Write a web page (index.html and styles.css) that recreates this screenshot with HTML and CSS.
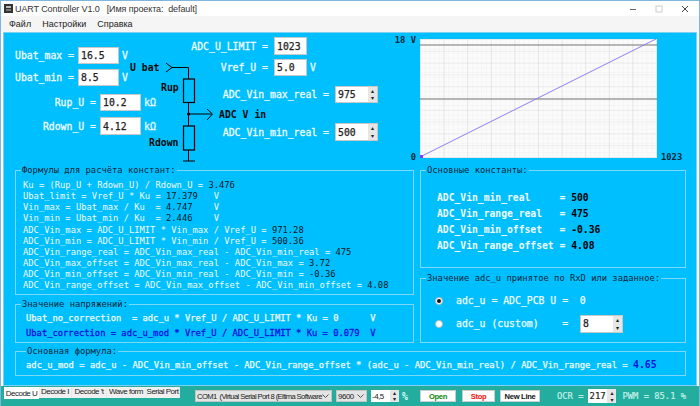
FILE: index.html
```html
<!DOCTYPE html>
<html lang="ru">
<head>
<meta charset="utf-8">
<title>UART Controller V1.0</title>
<link rel="stylesheet" href="styles.css">
</head>
<body>
<div class="window">
  <header class="titlebar">
    <svg class="appicon" width="9" height="9" viewBox="0 0 9 9"><rect width="9" height="9" fill="#333"/><rect x="2" y="2" width="5" height="2" fill="#bbb"/><rect x="2" y="5" width="5" height="2" fill="#777"/></svg>
    <span class="title">UART Controller V1.0</span>
    <span class="title project">[Имя проекта:&nbsp; default]</span>
    <div class="winctl">
      <svg width="8" height="8" viewBox="0 0 8 8"><rect x="1" y="4" width="6" height="1" fill="#666"/></svg>
      <svg width="8" height="8" viewBox="0 0 8 8"><rect x="1" y="1" width="6" height="6" fill="none" stroke="#ccc"/></svg>
      <svg width="8" height="8" viewBox="0 0 8 8"><path d="M1 1L7 7M7 1L1 7" stroke="#444"/></svg>
    </div>
  </header>
  <nav class="menubar"><span>Файл</span><span>Настройки</span><span>Справка</span></nav>

  <main class="panel">
    <section class="top">
      <div class="params">
        <div class="row r-ubat1"><span class="lbl w-ubat">Ubat_max =</span><span class="input w41">16.5</span><span class="unit">V</span></div>
        <div class="row r-ubat2"><span class="lbl w-ubat">Ubat_min =</span><span class="input w41">8.5</span><span class="unit">V</span></div>
        <div class="row r-rup"><span class="lbl w-r">Rup_U =</span><span class="input w41">10.2</span><span class="unit">kΩ</span></div>
        <div class="row r-rdown"><span class="lbl w-r">Rdown_U =</span><span class="input w41">4.12</span><span class="unit">kΩ</span></div>
      </div>
      <div class="adc">
        <div class="row a-limit"><span class="lbl w-adc">ADC_U_LIMIT =</span><span class="input w33">1023</span></div>
        <div class="row a-vref"><span class="lbl w-adc">Vref_U =</span><span class="input w33">5.0</span><span class="unit">V</span></div>
        <div class="row a-max"><span class="lbl w-real">ADC_Vin_max_real =</span><span class="input spin w43">975<i class="spinner"><b>▴</b><b>▾</b></i></span></div>
        <div class="row a-min"><span class="lbl w-real">ADC_Vin_min_real =</span><span class="input spin w43">500<i class="spinner"><b>▴</b><b>▾</b></i></span></div>
      </div>
      <div class="chart">
        <span class="axis a18">18 V</span>
        <svg class="plot" width="237" height="119" viewBox="0 0 237 119">
          <defs>
            <pattern id="minor" width="4.72" height="4.72" patternUnits="userSpaceOnUse"><path d="M0 0H4.72M0 0V4.72" stroke="#efefef" fill="none" stroke-width="1"/></pattern>
            <pattern id="major" width="23.6" height="11.8" patternUnits="userSpaceOnUse"><path d="M0 0H23.6" stroke="#e0e0e0" fill="none"/><path d="M0 0V11.8" stroke="#d8d8d8" fill="none"/></pattern>
          </defs>
          <rect width="237" height="119" fill="#fbfbfb"/>
          <rect width="237" height="119" fill="url(#minor)"/>
          <rect width="237" height="119" fill="url(#major)"/>
          <path d="M0 6H237M0 60H237" stroke="#777" stroke-width="1.1"/>
          <path d="M0 118L236 0" stroke="#8f7fe6" stroke-width="1"/>
          <rect x="0" y="116" width="3" height="3" fill="#8a3cf0"/>
        </svg>
        <span class="axis a0">0</span>
        <span class="axis a1023">1023</span>
      </div>
      <svg class="schema" width="100" height="135" viewBox="130 33 100 135">
        <text x="130" y="71" class="st">U bat</text>
        <text x="161" y="91" class="st">Rup</text>
        <text x="149" y="146" class="st">Rdown</text>
        <text x="219" y="118" class="st">ADC V in</text>
        <path d="M166 63L172 67.5L166 72M172 67.5H188.5V79M188.5 102.5V126M188.5 114H212M207 109L212.5 114L207 120M188.5 150V161M183 161H195" fill="none" stroke="#000" stroke-width="1"/>
        <rect x="183.5" y="79" width="11" height="23.5" fill="none" stroke="#000" stroke-width="1.2"/>
        <rect x="183.5" y="126" width="11" height="24" fill="none" stroke="#000" stroke-width="1.2"/>
        <circle cx="188.5" cy="114" r="1.5" fill="#000"/>
      </svg>
    </section>

    <section class="middle">
      <div class="left-col">
        <fieldset class="box formulas">
          <legend>Формулы для расчёта констант:</legend>
          <p>Ku = (Rup_U + Rdown_U) / Rdown_U = <b>3.476</b></p>
          <p>Ubat_limit = Vref_U * Ku = <b>17.379</b>&nbsp;&nbsp; V</p>
          <p>Vin_max = Ubat_max / Ku&nbsp; = <b>4.747</b>&nbsp;&nbsp;&nbsp; V</p>
          <p>Vin_min = Ubat_min / Ku&nbsp; = <b>2.446</b>&nbsp;&nbsp;&nbsp; V</p>
          <p>ADC_Vin_max = ADC_U_LIMIT * Vin_max / Vref_U = <b>971.28</b></p>
          <p>ADC_Vin_min = ADC_U_LIMIT * Vin_min / Vref_U = <b>500.36</b></p>
          <p>ADC_Vin_range_real = ADC_Vin_max_real - ADC_Vin_min_real = <b>475</b></p>
          <p>ADC_Vin_max_offset = ADC_Vin_max_real - ADC_Vin_max = <b>3.72</b></p>
          <p>ADC_Vin_min_offset = ADC_Vin_min_real - ADC_Vin_min = <b>-0.36</b></p>
          <p>ADC_Vin_range_offset = ADC_Vin_max_offset - ADC_Vin_min_offset = <b>4.08</b></p>
        </fieldset>
        <fieldset class="box voltages">
          <legend>Значение напряжений:</legend>
          <p>Ubat_no_correction&nbsp; = adc_u * Vref_U / ADC_U_LIMIT * Ku = 0&nbsp;&nbsp;&nbsp;&nbsp;&nbsp; V</p>
          <p class="blue">Ubat_correction = adc_u_mod * Vref_U / ADC_U_LIMIT * Ku = 0.079&nbsp; V</p>
        </fieldset>
      </div>
      <div class="right-col">
        <fieldset class="box constants">
          <legend>Основные константы:</legend>
          <p>ADC_Vin_min_real&nbsp;&nbsp;&nbsp;&nbsp; = <b>500</b></p>
          <p>ADC_Vin_range_real&nbsp;&nbsp; = <b>475</b></p>
          <p>ADC_Vin_min_offset&nbsp;&nbsp; = <b>-0.36</b></p>
          <p>ADC_Vin_range_offset = <b>4.08</b></p>
        </fieldset>
        <fieldset class="box source">
          <legend>Значение adc_u принятое по RxD или заданное:</legend>
          <div class="radio-row"><span class="radio on"></span><span>adc_u = ADC_PCB U =&nbsp; 0</span></div>
          <div class="radio-row"><span class="radio"></span><span>adc_u (custom)&nbsp;&nbsp;&nbsp; =</span><span class="input spin w43 custom">8<i class="spinner"><b>▴</b><b>▾</b></i></span></div>
        </fieldset>
      </div>
    </section>

    <fieldset class="box main-formula">
      <legend>Основная формула:</legend>
      <p>adc_u_mod = adc_u - ADC_Vin_min_offset - ADC_Vin_range_offset * (adc_u - ADC_Vin_min_real) / ADC_Vin_range_real = <b>4.65</b></p>
    </fieldset>
  </main>

  <footer class="bottom">
    <div class="tabs"><span class="tab active t1">Decode U</span><span class="tab t2">Decode I</span><span class="tab t3">Decode 't</span><span class="tab t4">Wave form</span><span class="tab t5">Serial Port</span></div>
    <span class="combo w-com"><span class="clip">COM1&nbsp; (Virtual Serial Port 8 (Eltima Software</span><svg class="arrow" width="7" height="4" viewBox="0 0 7 4"><path d="M0.5 0.5L3.5 3.5L6.5 0.5" fill="none" stroke="#555"/></svg></span>
    <span class="combo w-baud">9600<svg class="arrow" width="7" height="4" viewBox="0 0 7 4"><path d="M0.5 0.5L3.5 3.5L6.5 0.5" fill="none" stroke="#555"/></svg></span>
    <span class="ninput w-off">-4,5<i class="spinner"><b>▴</b><b>▾</b></i></span>
    <span class="pct">%</span>
    <button class="btn open">Open</button>
    <button class="btn stop">Stop</button>
    <button class="btn newline">New Line</button>
    <span class="stat ocr">OCR =</span>
    <span class="ninput w-ocr">217<i class="spinner"><b>▴</b><b>▾</b></i></span>
    <span class="stat pwm">PWM = 85.1 %</span>
  </footer>
</div>
</body>
</html>
```
FILE: styles.css
```css
* { box-sizing: border-box; }
html, body { margin: 0; padding: 0; }
body { width: 700px; height: 406px; overflow: hidden; font-family: "DejaVu Sans Mono", monospace; background: #fff; }
.window { width: 700px; height: 406px; display: flex; flex-direction: column; background: #fff; border: 1px solid #7fb6dc; border-bottom: 0; }

.titlebar { height: 15px; flex: none; background: #fff; display: flex; align-items: center; padding-left: 3px; font: 9px "Liberation Sans", sans-serif; letter-spacing: -0.1px; color: #333; }
.appicon { margin-right: 2px; }
.title { white-space: pre; }
.project { margin-left: 7px; }
.winctl { margin-left: auto; display: flex; gap: 18px; padding-right: 10px; }
.menubar { height: 16px; flex: none; background: #f5f5f5; display: flex; gap: 11px; padding-left: 8px; align-items: center; font: 9px "Liberation Sans", sans-serif; color: #222; }

.panel { flex: none; height: 354px; margin: 0 2px; background: #00bfff; border: 1px solid #7dd0f0; position: relative; display: flex; flex-direction: column; }

.top { height: 133px; flex: none; display: flex; position: relative; }
.params { width: 186px; flex: none; padding-top: 14px; }
.row { display: flex; align-items: center; font-size: 9.8px; color: #eefaff; -webkit-text-stroke: 0.3px #eefaff; }
.lbl { text-align: right; white-space: pre; flex: none; }
.unit { margin-left: 3px; }
.input { background: #fff; color: #222; -webkit-text-stroke: 0.25px #222; border: 1px solid #c8c8c8; font-size: 9.8px; display: flex; align-items: center; padding-left: 2px; position: relative; height: 100%; }
.w41 { width: 41px; }
.w33 { width: 33px; }
.w43 { width: 43px; }
.w-ubat { width: 70px; margin-right: 4px; }
.w-r { width: 92px; margin-right: 4px; }
.w-adc { width: 78px; margin-right: 6px; }
.w-real { width: 139px; margin-right: 6px; }
.r-ubat1 { height: 17px; }
.r-ubat2 { height: 17px; margin-top: 5px; }
.r-rup { height: 17px; margin-top: 8px; }
.r-rdown { height: 18px; margin-top: 6px; }

.adc { width: 190px; flex: none; padding-top: 4px; }
.a-limit { height: 18px; }
.a-vref { height: 17px; margin-top: 4px; }
.a-max { height: 17px; margin-top: 10px; }
.a-min { height: 18px; margin-top: 20px; }

.spin { padding-right: 10px; }
.spinner { position: absolute; right: 0; top: 0; bottom: 0; width: 9px; background: #e6e6e6; display: flex; flex-direction: column; font-style: normal; -webkit-text-stroke: 0; }
.spinner b { flex: 1; display: flex; align-items: center; justify-content: center; font: 6px/1 "DejaVu Sans", sans-serif; color: #222; letter-spacing: 0; }

.chart { position: relative; margin-left: 40px; margin-top: 6px; width: 237px; height: 119px; flex: none; }
.plot { display: block; }
.axis { position: absolute; font-size: 8.8px; font-weight: 700; color: #0a2a3a; line-height: 10px; }
.a18 { right: 241px; top: -4px; white-space: pre; }
.a0 { right: 241px; top: 113px; }
.a1023 { left: 241px; top: 113px; }

.schema { position: absolute; left: 126px; top: 0; overflow: visible; }
.st { font: 700 9.8px "DejaVu Sans Mono", monospace; fill: #0b0b0b; }

.middle { display: flex; gap: 6px; padding-left: 11px; height: 177px; flex: none; }
.left-col { width: 399px; flex: none; display: flex; flex-direction: column; gap: 5px; }
.right-col { width: 266px; flex: none; display: flex; flex-direction: column; gap: 6px; }

.box { margin: 0; padding: 0; border: 1px solid #7dd8f6; min-width: 0; font-size: 8.8px; color: #eefaff; position: relative; }
.box legend { font-size: 8.8px; font-weight: 400; color: #06283a; -webkit-text-stroke: 0; padding: 0 1px; margin-left: 5px; line-height: 9px; height: 9px; white-space: pre; }
.box p { margin: 0; white-space: pre; }
.box b { color: #051a25; font-weight: 400; }

.formulas { height: 129px; padding-top: 5px; }
.formulas p { line-height: 11.15px; margin-left: 7px; }
.voltages { height: 43px; padding-top: 2px; -webkit-text-stroke: 0.25px #eefaff; }
.voltages p { line-height: 15px; margin-left: 10px; }
.voltages .blue { color: #0a14e0; -webkit-text-stroke: 0.3px #0a14e0; }

.constants { height: 102px; padding-top: 15px; font-size: 9.7px; font-weight: 700; }
.constants p { line-height: 16px; margin-left: 16px; }
.constants b { font-weight: 700; color: #000; }
.source { height: 69px; padding-top: 6px; font-size: 9.8px; -webkit-text-stroke: 0.25px #eefaff; }
.radio-row { display: flex; align-items: center; height: 23px; white-space: pre; margin-left: 14px; }
.radio { width: 8px; height: 8px; border-radius: 50%; background: #fff; border: 1px solid #bbb; margin-right: 13px; position: relative; flex: none; }
.radio.on::after { content: ""; position: absolute; left: 1px; top: 1px; width: 4px; height: 4px; border-radius: 50%; background: #111; }
.custom { height: 18px; margin-left: 12px; }

.main-formula { margin: 4px 0 0 11px; width: 671px; height: 29px; padding-top: 2px; font-size: 8.85px; -webkit-text-stroke: 0.25px #eefaff; }
.main-formula legend { margin-left: 10px; }
.main-formula p { line-height: 14px; margin-left: 10px; }
.main-formula b { color: #0a14e0; -webkit-text-stroke: 0; font-size: 9.8px; font-weight: 700; }

.bottom { flex: 1; background: #22ad9f; display: flex; align-items: center; position: relative; font: 8px "Liberation Sans", sans-serif; letter-spacing: -0.5px; color: #222; }
.tabs { display: flex; align-self: flex-start; width: 194px; padding: 1px 0 0 3px; }
.tab { background: #f0f0f0; height: 11px; line-height: 10px; text-align: center; white-space: nowrap; border-right: 1px solid #d8f0f0; }
.tab.active { background: #fff; height: 12px; line-height: 13px; border-right: 0; }
.t1 { width: 35px; }
.t2 { width: 33px; }
.t3 { width: 35px; }
.t4 { width: 39px; }
.t5 { width: 34px; }
.combo { height: 12px; background: #e4e4e4; border: 1px solid #c4c4c4; display: flex; align-items: center; justify-content: space-between; padding: 0 2px 0 1px; white-space: nowrap; overflow: hidden; }
.clip { font-size: 7.6px; letter-spacing: -0.6px; }
.arrow { flex: none; }
.w-com { width: 137px; }
.w-baud { width: 31px; margin-left: 4px; }
.ninput { height: 12px; background: #fff; position: relative; display: flex; align-items: center; padding-left: 1px; }
.w-off { width: 28px; margin-left: 4px; }
.w-ocr { width: 28px; margin-left: 5px; font: 9px "DejaVu Sans Mono", monospace; letter-spacing: 0; -webkit-text-stroke: 0.2px #222; height: 14px; }
.pct { color: #dff; font: 700 10px "DejaVu Sans Mono", monospace; letter-spacing: 0; margin-left: 3px; width: 8px; }
.btn { height: 12px; border: 1px solid #ccc; background: #fff; font: 700 7.6px "Liberation Sans", sans-serif; letter-spacing: -0.3px; padding: 0; flex: none; }
.open { width: 36px; margin-left: 10px; color: #0a8a0a; }
.stop { width: 33px; margin-left: 6px; color: #f01010; }
.newline { width: 40px; margin-left: 5px; color: #111; }
.stat { font: 8.8px "DejaVu Sans Mono", monospace; letter-spacing: 0; -webkit-text-stroke: 0.2px #c4efe9; color: #c4efe9; white-space: pre; }
.ocr { margin-left: 17px; }
.pwm { margin-left: 6px; }
```
